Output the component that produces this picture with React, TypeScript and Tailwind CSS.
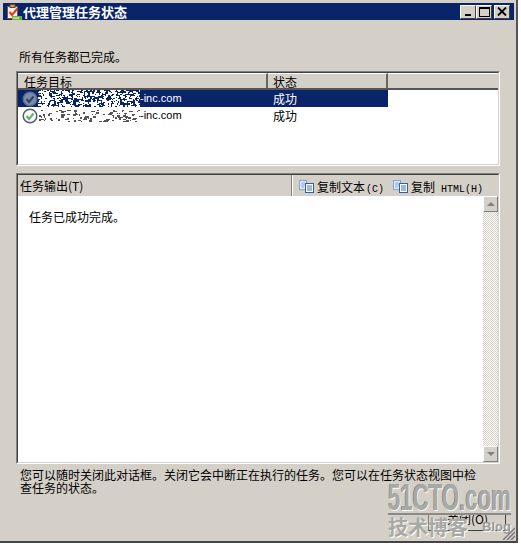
const cjk = { fontFamily: '"Noto Sans CJK SC", "Liberation Sans", sans-serif' };

// cheap seeded random so the blotted hostnames stay the same between runs
const noise = (seed: number, count: number, w: number, h: number) => {
  let s = seed;
  const next = () => {
    s = (s * 9301 + 49297) % 233280;
    return s / 233280;
  };
  return Array.from({ length: count }, () => ({
    x: Math.floor(next() * w),
    y: Math.floor(next() * h),
    w: 1 + Math.floor(next() * 3),
    h: 1 + Math.floor(next() * 2),
  }));
};

const Noise = ({ seed, count, color, height }: { seed: number; count: number; color: string; height: number }) => (
  <svg width="102" height={height} className="shrink-0">
    {noise(seed, count, 102, height).map((r, i) => (
      <rect key={i} x={r.x} y={r.y} width={r.w} height={r.h} fill={color} />
    ))}
  </svg>
);

const AppIcon = () => (
  <svg width="16" height="16" viewBox="0 0 16 16" className="shrink-0">
    <rect x="1.5" y="2.5" width="10" height="12" fill="#f4efe0" stroke="#6a5a50" />
    <rect x="4" y="0.5" width="5" height="3" fill="#c8a060" stroke="#6a4a30" />
    <path d="M3.5 8 L6 11 L11.5 4.5" fill="none" stroke="#d83a20" strokeWidth="2" />
    <rect x="6" y="12" width="10" height="4" fill="#70b040" />
    <path d="M8 13v2M10 13v2M12 13v2" stroke="#fff" />
  </svg>
);

const StatusIcon = ({ selected }: { selected: boolean }) => (
  <svg width="16" height="16" viewBox="0 0 16 16" className="shrink-0">
    <circle cx="8" cy="8" r="6.8" fill={selected ? "#7d8bad" : "#fbfbf8"} stroke={selected ? "#5a6a96" : "#4f5f70"} strokeWidth="1.5" />
    <path d="M4.5 8 L7 11 L11.5 5.5" fill="none" stroke={selected ? "#39435c" : "#6fae78"} strokeWidth="2.2" />
  </svg>
);

const CopyIcon = () => (
  <svg width="15" height="13" viewBox="0 0 15 13" className="shrink-0">
    <rect x="0.5" y="0.5" width="7" height="9" fill="#e6eefb" stroke="#7da3dc" />
    <path d="M2 3h4M2 5h4M2 7h3" stroke="#7da3dc" />
    <rect x="6.5" y="3.5" width="8" height="9" fill="#fff" stroke="#2f5fae" />
    <path d="M8 6h5M8 8h5M8 10h5" stroke="#3f70bd" />
  </svg>
);

const CaptionButton = ({ children, className }: { children: React.ReactNode; className?: string }) => (
  <div className={`flex h-[14px] w-[16px] items-center justify-center border border-t-white border-l-white border-r-[#404040] border-b-[#404040] bg-[#d4d0c8] ${className ?? ""}`}>
    {children}
  </div>
);

const Sunken = ({ className, children }: { className: string; children: React.ReactNode }) => (
  <div className={`border border-t-[#808080] border-l-[#808080] border-r-white border-b-white ${className}`}>
    <div className="flex h-full flex-col border border-t-[#404040] border-l-[#404040] border-r-[#d4d0c8] border-b-[#d4d0c8] bg-white">
      {children}
    </div>
  </div>
);

const HeaderCell = ({ label, className }: { label?: string; className: string }) => (
  <div className={`h-full border-t border-t-white border-r-2 border-r-[#666] text-[12px] leading-[16px] text-black ${className}`}>
    {label}
  </div>
);

const rows = [
  { selected: true, seed: 17, count: 520 },
  { selected: false, seed: 91, count: 110 },
];

const App = () => {
  return (
    <div className="h-[545px] w-[521px] bg-white" style={cjk}>
      <div className="relative flex h-[543px] w-[518px] flex-col border-r-2 border-b-2 border-r-[#555] border-b-[#444] bg-[#d4d0c8] p-[3px]">
        <div className="flex h-[17px] w-[511px] shrink-0 items-center bg-[#0a246a] pr-[3px] pl-[3px]">
          <AppIcon />
          <span className="ml-[1px] text-[13px] leading-[17px] font-bold text-white">代理管理任务状态</span>
          <CaptionButton className="ml-auto">
            <div className="mt-[6px] h-[2px] w-[6px] bg-black" />
          </CaptionButton>
          <CaptionButton>
            <div className="h-[10px] w-[11px] border border-t-2 border-black" />
          </CaptionButton>
          <CaptionButton className="mr-[1px] ml-[2px]">
            <svg width="10" height="9" viewBox="0 0 10 9">
              <path d="M1 0.5 L9 8.5 M9 0.5 L1 8.5" stroke="#000" strokeWidth="1.8" />
            </svg>
          </CaptionButton>
        </div>

        <div className="flex flex-1 flex-col pl-[13px]">
          <div className="mt-[31px] ml-[3px] text-[12px] leading-[12px] text-black">所有任务都已完成。</div>

          <Sunken className="mt-[8px] h-[95px] w-[484px] shrink-0">
            <div className="flex h-[17px] shrink-0 border-b-2 border-b-[#555] bg-[#d4d0c8]">
              <HeaderCell label="任务目标" className="w-[250px] pl-[6px]" />
              <HeaderCell label="状态" className="w-[120px] pl-[5px]" />
              <div className="h-full flex-1 border-t border-t-white" />
            </div>
            {rows.map((row) => (
              <div
                key={row.seed}
                className={`flex h-[17px] w-[370px] shrink-0 items-center pl-[4px] text-[12px] ${row.selected ? "bg-[#0a246a] text-white" : "bg-white text-black"}`}
              >
                <StatusIcon selected={row.selected} />
                <Noise seed={row.seed} count={row.count} color={row.selected ? "#ffffff" : "#555555"} height={row.selected ? 17 : 12} />
                <span className="w-[133px] shrink-0 text-[11px] [font-family:'Liberation_Sans',sans-serif]">-inc.com</span>
                <span className="leading-[17px]">成功</span>
              </div>
            ))}
          </Sunken>

          <Sunken className="mt-[7px] h-[291px] w-[484px] shrink-0">
            <div className="flex h-[21px] shrink-0 items-center bg-[#d4d0c8] text-[12px] text-black">
              <span className="mt-[1px] ml-[2px] w-[271px]">任务输出(T)</span>
              <div className="h-full w-[2px] border-l border-l-[#808080] bg-white" />
              <div className="mt-[2px] ml-[6px]"><CopyIcon /></div>
              <span className="mt-[3px] ml-[3px] whitespace-nowrap">
                复制文本<span className="ml-[1px] text-[10px] [font-family:'Liberation_Mono',monospace]">(C)</span>
              </span>
              <div className="mt-[2px] ml-[9px]"><CopyIcon /></div>
              <span className="mt-[3px] ml-[3px] whitespace-nowrap">
                复制<span className="ml-[6px] text-[10px] [font-family:'Liberation_Mono',monospace]">HTML(H)</span>
              </span>
            </div>
            <div className="flex min-h-0 flex-1">
              <div className="flex-1 pt-[15px] pl-[11px] text-[12px] leading-[12px] text-black">任务已成功完成。</div>
              <div className="flex w-[15px] shrink-0 flex-col">
                <div className="flex h-[16px] items-center justify-center border border-white border-r-[#808080] border-b-[#808080] bg-[#d4d0c8]">
                  <div className="h-0 w-0 border-x-[4px] border-b-[4px] border-x-transparent border-b-[#808080]" />
                </div>
                <div className="flex-1 bg-[repeating-conic-gradient(#d4d0c8_0_25%,#ffffff_0_50%)] bg-[length:2px_2px]" />
                <div className="flex h-[16px] items-center justify-center border border-white border-r-[#808080] border-b-[#808080] bg-[#d4d0c8]">
                  <div className="h-0 w-0 border-x-[4px] border-t-[4px] border-x-transparent border-t-[#808080]" />
                </div>
              </div>
            </div>
          </Sunken>

          <div className="mt-[4px] ml-[4px] w-[462px] text-[12px] leading-[13px] text-black">
            您可以随时关闭此对话框。关闭它会中断正在执行的任务。您可以在任务状态视图中检查任务的状态。
          </div>

          <div className="mt-[19px] ml-[412px] h-[18px] w-[78px] overflow-hidden border-r border-b border-l border-r-[#404040] border-b-[#404040] border-l-[#808080] pl-[18px] text-[12px] leading-[12px] text-black">
            关闭(O)
          </div>
        </div>

        {/* 51CTO watermark lies over the close button */}
        <div className="absolute top-[484px] left-[388px] w-[126px] [font-family:'Liberation_Sans',sans-serif]">
          <div className="origin-left scale-x-[0.6] text-[37px] leading-[28px] font-bold whitespace-nowrap text-[#a8a8a4] [text-shadow:1px_1px_0_#ffffff,-1px_0_0_#777777]">
            51CTO.com
          </div>
          <div className="mt-[1px] h-[2px] w-[123px] bg-[#8a8a88]" />
          <div className="mt-[2px] flex items-center">
            <span className="text-[20px] leading-[20px] font-bold text-[#a8a8a4] [text-shadow:1px_1px_0_#ffffff]" style={cjk}>技术博客</span>
            <span className="ml-[14px] text-[13px] leading-[14px] font-bold text-[#999995] [text-shadow:1px_1px_0_#ffffff]">Blog</span>
          </div>
        </div>

        <svg width="13" height="13" viewBox="0 0 13 13" className="absolute right-[1px] bottom-[1px]">
          <path d="M13 1 L1 13 M13 5 L5 13 M13 9 L9 13" stroke="#777" strokeWidth="1.4" />
        </svg>
      </div>
    </div>
  );
};

export default App;
